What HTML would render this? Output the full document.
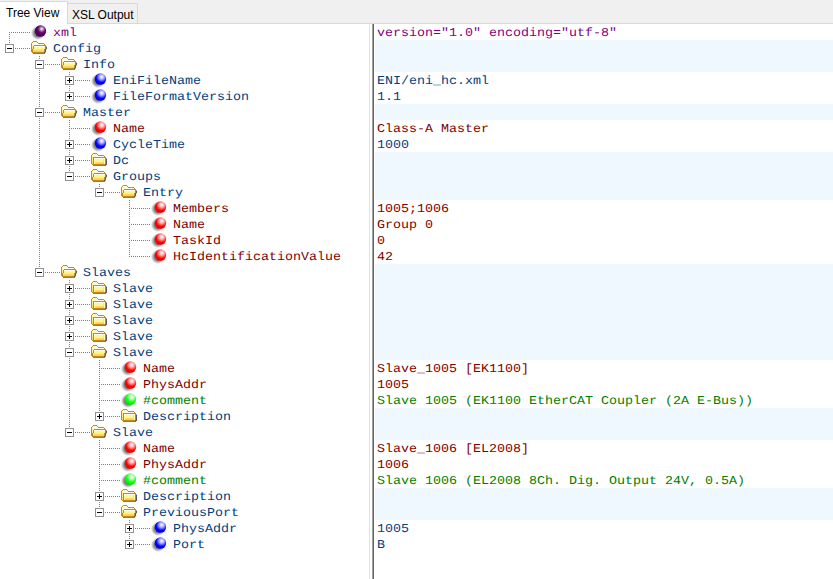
<!DOCTYPE html>
<html lang="en"><head><meta charset="utf-8"><title>XML Notepad</title>
<style>
html,body{margin:0;padding:0}
body{width:833px;height:579px;overflow:hidden;background:#fff;position:relative;
 font-family:"Liberation Mono","DejaVu Sans Mono",monospace;font-size:13.333px;line-height:16px}
#tabs{position:absolute;left:0;top:0;width:833px;height:23px;background:#f0f0f0;border-bottom:1px solid #d9d9d9}
.tab{position:absolute;font-family:"Liberation Sans",Arial,sans-serif;font-size:12px;letter-spacing:0;color:#000;box-sizing:border-box;white-space:nowrap}
#t1{left:0;top:1px;width:68px;height:23px;background:#fff;border-top:1px solid #d9d9d9;border-right:1px solid #d9d9d9;padding:4px 0 0 6px;line-height:14px}
#t2{left:67px;top:3px;width:71px;height:21px;background:#f0f0f0;border:1px solid #d9d9d9;border-left:none;padding:4px 0 0 5px;line-height:14px}
#left{position:absolute;left:0;top:24px;width:369px;height:555px;background:#fff;overflow:hidden}
#sp1{position:absolute;left:369px;top:24px;width:1px;height:555px;background:#e3e3e3}
#sp2{position:absolute;left:372px;top:24px;width:1px;height:555px;background:#a0a0a0}
#sp3{position:absolute;left:373px;top:24px;width:1px;height:555px;background:#646464}
#right{position:absolute;left:374px;top:24px;width:459px;height:555px;background:#fff;overflow:hidden}
.ov{position:absolute;left:0;top:0;pointer-events:none}
.n{position:absolute;height:16px;white-space:pre;padding-top:1px}
.v{position:absolute;left:1px;width:458px;height:16px;white-space:pre;padding-left:2px;padding-top:1px;box-sizing:border-box}
.n span,.v span{display:inline-block;text-rendering:geometricPrecision;transform:scaleY(0.9);transform-origin:0 12px}
.k{background:#f0f8ff}
.e{color:#004080}.a{color:#800000}.c{color:#008000}.p{color:#800080}
</style></head><body>
<div id="tabs"></div>
<div class="tab" id="t2">XSL Output</div>
<div class="tab" id="t1">Tree View</div>
<div id="left">
<div class="n p" style="left:53px;top:0px"><span>xml</span></div>
<div class="n e" style="left:53px;top:16px"><span>Config</span></div>
<div class="n e" style="left:83px;top:32px"><span>Info</span></div>
<div class="n e" style="left:113px;top:48px"><span>EniFileName</span></div>
<div class="n e" style="left:113px;top:64px"><span>FileFormatVersion</span></div>
<div class="n e" style="left:83px;top:80px"><span>Master</span></div>
<div class="n a" style="left:113px;top:96px"><span>Name</span></div>
<div class="n e" style="left:113px;top:112px"><span>CycleTime</span></div>
<div class="n e" style="left:113px;top:128px"><span>Dc</span></div>
<div class="n e" style="left:113px;top:144px"><span>Groups</span></div>
<div class="n e" style="left:143px;top:160px"><span>Entry</span></div>
<div class="n a" style="left:173px;top:176px"><span>Members</span></div>
<div class="n a" style="left:173px;top:192px"><span>Name</span></div>
<div class="n a" style="left:173px;top:208px"><span>TaskId</span></div>
<div class="n a" style="left:173px;top:224px"><span>HcIdentificationValue</span></div>
<div class="n e" style="left:83px;top:240px"><span>Slaves</span></div>
<div class="n e" style="left:113px;top:256px"><span>Slave</span></div>
<div class="n e" style="left:113px;top:272px"><span>Slave</span></div>
<div class="n e" style="left:113px;top:288px"><span>Slave</span></div>
<div class="n e" style="left:113px;top:304px"><span>Slave</span></div>
<div class="n e" style="left:113px;top:320px"><span>Slave</span></div>
<div class="n a" style="left:143px;top:336px"><span>Name</span></div>
<div class="n a" style="left:143px;top:352px"><span>PhysAddr</span></div>
<div class="n c" style="left:143px;top:368px"><span>#comment</span></div>
<div class="n e" style="left:143px;top:384px"><span>Description</span></div>
<div class="n e" style="left:113px;top:400px"><span>Slave</span></div>
<div class="n a" style="left:143px;top:416px"><span>Name</span></div>
<div class="n a" style="left:143px;top:432px"><span>PhysAddr</span></div>
<div class="n c" style="left:143px;top:448px"><span>#comment</span></div>
<div class="n e" style="left:143px;top:464px"><span>Description</span></div>
<div class="n e" style="left:143px;top:480px"><span>PreviousPort</span></div>
<div class="n e" style="left:173px;top:496px"><span>PhysAddr</span></div>
<div class="n e" style="left:173px;top:512px"><span>Port</span></div>
</div>
<div id="sp1"></div><div id="sp2"></div><div id="sp3"></div>
<div id="right">
<div class="v p" style="top:0px"><span>version="1.0" encoding="utf-8"</span></div>
<div class="v e k" style="top:16px"></div>
<div class="v e k" style="top:32px"></div>
<div class="v e" style="top:48px"><span>ENI/eni_hc.xml</span></div>
<div class="v e" style="top:64px"><span>1.1</span></div>
<div class="v e k" style="top:80px"></div>
<div class="v a" style="top:96px"><span>Class-A Master</span></div>
<div class="v e" style="top:112px"><span>1000</span></div>
<div class="v e k" style="top:128px"></div>
<div class="v e k" style="top:144px"></div>
<div class="v e k" style="top:160px"></div>
<div class="v a" style="top:176px"><span>1005;1006</span></div>
<div class="v a" style="top:192px"><span>Group 0</span></div>
<div class="v a" style="top:208px"><span>0</span></div>
<div class="v a" style="top:224px"><span>42</span></div>
<div class="v e k" style="top:240px"></div>
<div class="v e k" style="top:256px"></div>
<div class="v e k" style="top:272px"></div>
<div class="v e k" style="top:288px"></div>
<div class="v e k" style="top:304px"></div>
<div class="v e k" style="top:320px"></div>
<div class="v a" style="top:336px"><span>Slave_1005 [EK1100]</span></div>
<div class="v a" style="top:352px"><span>1005</span></div>
<div class="v c" style="top:368px"><span>Slave 1005 (EK1100 EtherCAT Coupler (2A E-Bus))</span></div>
<div class="v e k" style="top:384px"></div>
<div class="v e k" style="top:400px"></div>
<div class="v a" style="top:416px"><span>Slave_1006 [EL2008]</span></div>
<div class="v a" style="top:432px"><span>1006</span></div>
<div class="v c" style="top:448px"><span>Slave 1006 (EL2008 8Ch. Dig. Output 24V, 0.5A)</span></div>
<div class="v e k" style="top:464px"></div>
<div class="v e k" style="top:480px"></div>
<div class="v e" style="top:496px"><span>1005</span></div>
<div class="v e" style="top:512px"><span>B</span></div>
</div>
<svg class="ov" width="370" height="579" viewBox="0 0 370 579">
<defs>
<radialGradient id="gb" cx="0.61" cy="0.31" r="0.66" fx="0.61" fy="0.31"><stop offset="0" stop-color="#f4f4ff"/><stop offset="0.16" stop-color="#dcdcff"/><stop offset="0.36" stop-color="#9a9aff"/><stop offset="0.56" stop-color="#4444ff"/><stop offset="0.74" stop-color="#0000ff"/><stop offset="0.9" stop-color="#0000ff"/><stop offset="1" stop-color="#0000e0"/></radialGradient>
<radialGradient id="gr" cx="0.61" cy="0.31" r="0.66" fx="0.61" fy="0.31"><stop offset="0" stop-color="#fff4f4"/><stop offset="0.16" stop-color="#ffdcdc"/><stop offset="0.36" stop-color="#ff9a9a"/><stop offset="0.56" stop-color="#ff4444"/><stop offset="0.74" stop-color="#ff0000"/><stop offset="0.9" stop-color="#ff0000"/><stop offset="1" stop-color="#e00000"/></radialGradient>
<radialGradient id="gg" cx="0.61" cy="0.31" r="0.66" fx="0.61" fy="0.31"><stop offset="0" stop-color="#f4fff4"/><stop offset="0.16" stop-color="#dcffdc"/><stop offset="0.36" stop-color="#9aff9a"/><stop offset="0.56" stop-color="#44ff44"/><stop offset="0.74" stop-color="#00ff00"/><stop offset="0.9" stop-color="#00ff00"/><stop offset="1" stop-color="#00d800"/></radialGradient>
<radialGradient id="gp" cx="0.61" cy="0.31" r="0.66" fx="0.61" fy="0.31"><stop offset="0" stop-color="#f2e8f4"/><stop offset="0.12" stop-color="#dcc4e0"/><stop offset="0.28" stop-color="#a068a8"/><stop offset="0.45" stop-color="#6c1e74"/><stop offset="0.62" stop-color="#58005f"/><stop offset="0.9" stop-color="#560060"/><stop offset="1" stop-color="#4a0052"/></radialGradient>
<radialGradient id="gs" cx="0.5" cy="0.5" r="0.5"><stop offset="0" stop-color="#000" stop-opacity="0.5"/><stop offset="0.5" stop-color="#000" stop-opacity="0.5"/><stop offset="0.7" stop-color="#000" stop-opacity="0.3"/><stop offset="0.86" stop-color="#000" stop-opacity="0.1"/><stop offset="1" stop-color="#000" stop-opacity="0"/></radialGradient>
<linearGradient id="ff" x1="0" y1="0" x2="0" y2="1">
<stop offset="0" stop-color="#fffbd0"/><stop offset="0.45" stop-color="#fff48c"/><stop offset="1" stop-color="#f7d77a"/>
</linearGradient>
<g id="sph-s"><circle cx="7.0" cy="8.9" r="7.3" fill="url(#gs)"/></g>
<g id="folder" shape-rendering="crispEdges">
<rect x="2" y="1" width="4" height="1" fill="#c48a1c"/><rect x="1" y="2" width="1" height="1" fill="#c48a1c"/><rect x="2" y="2" width="4" height="1" fill="#fffbd6"/><rect x="6" y="2" width="1" height="1" fill="#c48a1c"/><rect x="0" y="3" width="1" height="1" fill="#c48a1c"/><rect x="1" y="3" width="6" height="1" fill="#fffbd6"/><rect x="7" y="3" width="6" height="1" fill="#c48a1c"/><rect x="0" y="4" width="1" height="1" fill="#c48a1c"/><rect x="1" y="4" width="1" height="1" fill="#fffef0"/><rect x="2" y="4" width="5" height="1" fill="#fffbd6"/><rect x="7" y="4" width="6" height="1" fill="#fffef0"/><rect x="13" y="4" width="1" height="1" fill="#c48a1c"/><rect x="0" y="5" width="1" height="1" fill="#c48a1c"/><rect x="1" y="5" width="2" height="1" fill="#fff29a"/><rect x="3" y="5" width="12" height="1" fill="#c48a1c"/><rect x="0" y="6" width="1" height="1" fill="#c48a1c"/><rect x="1" y="6" width="1" height="1" fill="#fff29a"/><rect x="2" y="6" width="1" height="1" fill="#c48a1c"/><rect x="3" y="6" width="11" height="1" fill="#fffde8"/><rect x="14" y="6" width="1" height="1" fill="#c48a1c"/><rect x="15" y="6" width="1" height="1" fill="rgba(70,70,100,0.45)"/><rect x="0" y="7" width="1" height="1" fill="#c48a1c"/><rect x="1" y="7" width="1" height="1" fill="#fff29a"/><rect x="2" y="7" width="1" height="1" fill="#c48a1c"/><rect x="3" y="7" width="11" height="1" fill="#fffa90"/><rect x="14" y="7" width="1" height="1" fill="#c48a1c"/><rect x="15" y="7" width="1" height="1" fill="rgba(55,45,55,0.8)"/><rect x="0" y="8" width="1" height="1" fill="#c48a1c"/><rect x="1" y="8" width="1" height="1" fill="#fbe38a"/><rect x="2" y="8" width="1" height="1" fill="#c48a1c"/><rect x="3" y="8" width="11" height="1" fill="#fff688"/><rect x="14" y="8" width="1" height="1" fill="#c48a1c"/><rect x="15" y="8" width="1" height="1" fill="rgba(55,45,55,0.8)"/><rect x="0" y="9" width="2" height="1" fill="#c48a1c"/><rect x="2" y="9" width="10" height="1" fill="#ffec80"/><rect x="12" y="9" width="1" height="1" fill="#fff688"/><rect x="13" y="9" width="1" height="1" fill="#c48a1c"/><rect x="14" y="9" width="1" height="1" fill="rgba(55,45,55,0.8)"/><rect x="15" y="9" width="1" height="1" fill="rgba(70,70,100,0.30)"/><rect x="0" y="10" width="2" height="1" fill="#c48a1c"/><rect x="2" y="10" width="11" height="1" fill="#ffd872"/><rect x="13" y="10" width="1" height="1" fill="#c48a1c"/><rect x="14" y="10" width="1" height="1" fill="rgba(55,45,55,0.8)"/><rect x="0" y="11" width="2" height="1" fill="#c48a1c"/><rect x="2" y="11" width="11" height="1" fill="#fcc864"/><rect x="13" y="11" width="1" height="1" fill="#c48a1c"/><rect x="14" y="11" width="1" height="1" fill="rgba(55,45,55,0.8)"/><rect x="1" y="12" width="12" height="1" fill="#c48a1c"/><rect x="13" y="12" width="1" height="1" fill="rgba(55,45,55,0.8)"/><rect x="14" y="12" width="1" height="1" fill="rgba(70,70,100,0.45)"/><rect x="2" y="13" width="12" height="1" fill="rgba(60,60,80,0.68)"/>
</g>
<g id="folderc" shape-rendering="crispEdges">
<rect x="2" y="1" width="4" height="1" fill="#c48a1c"/><rect x="1" y="2" width="1" height="1" fill="#c48a1c"/><rect x="2" y="2" width="4" height="1" fill="#fffbd6"/><rect x="6" y="2" width="1" height="1" fill="#c48a1c"/><rect x="0" y="3" width="1" height="1" fill="#c48a1c"/><rect x="1" y="3" width="6" height="1" fill="#fffbd6"/><rect x="7" y="3" width="6" height="1" fill="#c48a1c"/><rect x="0" y="4" width="1" height="1" fill="#c48a1c"/><rect x="1" y="4" width="1" height="1" fill="#fff29a"/><rect x="2" y="4" width="4" height="1" fill="#fffbd6"/><rect x="6" y="4" width="7" height="1" fill="#fffef0"/><rect x="13" y="4" width="1" height="1" fill="#c48a1c"/><rect x="0" y="5" width="1" height="1" fill="#c48a1c"/><rect x="1" y="5" width="1" height="1" fill="#fff29a"/><rect x="2" y="5" width="13" height="1" fill="#c48a1c"/><rect x="0" y="6" width="1" height="1" fill="#c48a1c"/><rect x="1" y="6" width="1" height="1" fill="#fff29a"/><rect x="2" y="6" width="1" height="1" fill="#c48a1c"/><rect x="3" y="6" width="11" height="1" fill="#fffde8"/><rect x="14" y="6" width="1" height="1" fill="#c48a1c"/><rect x="15" y="6" width="1" height="1" fill="rgba(70,70,100,0.45)"/><rect x="0" y="7" width="1" height="1" fill="#c48a1c"/><rect x="1" y="7" width="1" height="1" fill="#fbe38a"/><rect x="2" y="7" width="1" height="1" fill="#c48a1c"/><rect x="3" y="7" width="9" height="1" fill="#fffa90"/><rect x="12" y="7" width="1" height="1" fill="#ffdc92"/><rect x="13" y="7" width="1" height="1" fill="#fffcc0"/><rect x="14" y="7" width="1" height="1" fill="#c48a1c"/><rect x="15" y="7" width="1" height="1" fill="rgba(55,45,55,0.8)"/><rect x="0" y="8" width="1" height="1" fill="#c48a1c"/><rect x="1" y="8" width="1" height="1" fill="#fbe38a"/><rect x="2" y="8" width="1" height="1" fill="#c48a1c"/><rect x="3" y="8" width="9" height="1" fill="#fffa90"/><rect x="12" y="8" width="1" height="1" fill="#ffdc92"/><rect x="13" y="8" width="1" height="1" fill="#fffcc0"/><rect x="14" y="8" width="1" height="1" fill="#c48a1c"/><rect x="15" y="8" width="1" height="1" fill="rgba(55,45,55,0.8)"/><rect x="0" y="9" width="1" height="1" fill="#c48a1c"/><rect x="1" y="9" width="1" height="1" fill="#fbd276"/><rect x="2" y="9" width="1" height="1" fill="#c48a1c"/><rect x="3" y="9" width="9" height="1" fill="#fff688"/><rect x="12" y="9" width="1" height="1" fill="#ffdc92"/><rect x="13" y="9" width="1" height="1" fill="#fffcc0"/><rect x="14" y="9" width="1" height="1" fill="#c48a1c"/><rect x="15" y="9" width="1" height="1" fill="rgba(55,45,55,0.8)"/><rect x="0" y="10" width="1" height="1" fill="#c48a1c"/><rect x="1" y="10" width="1" height="1" fill="#fbd276"/><rect x="2" y="10" width="1" height="1" fill="#c48a1c"/><rect x="3" y="10" width="1" height="1" fill="#fffa90"/><rect x="4" y="10" width="9" height="1" fill="#ffd872"/><rect x="13" y="10" width="1" height="1" fill="#fffcc0"/><rect x="14" y="10" width="1" height="1" fill="#c48a1c"/><rect x="15" y="10" width="1" height="1" fill="rgba(55,45,55,0.8)"/><rect x="0" y="11" width="1" height="1" fill="#c48a1c"/><rect x="1" y="11" width="1" height="1" fill="#fbd276"/><rect x="2" y="11" width="1" height="1" fill="#c48a1c"/><rect x="3" y="11" width="1" height="1" fill="#fffa90"/><rect x="4" y="11" width="9" height="1" fill="#fcc864"/><rect x="13" y="11" width="1" height="1" fill="#fffcc0"/><rect x="14" y="11" width="1" height="1" fill="#c48a1c"/><rect x="15" y="11" width="1" height="1" fill="rgba(55,45,55,0.8)"/><rect x="1" y="12" width="13" height="1" fill="#c48a1c"/><rect x="14" y="12" width="2" height="1" fill="rgba(55,45,55,0.8)"/><rect x="2" y="13" width="13" height="1" fill="rgba(60,60,80,0.68)"/>
</g>
</defs>
<path d="M9 32h1v1h-1zM11 32h1v1h-1zM13 32h1v1h-1zM15 32h1v1h-1zM17 32h1v1h-1zM19 32h1v1h-1zM21 32h1v1h-1zM23 32h1v1h-1zM25 32h1v1h-1zM27 32h1v1h-1zM29 32h1v1h-1zM9 34h1v1h-1zM9 36h1v1h-1zM9 38h1v1h-1zM9 40h1v1h-1zM9 42h1v1h-1zM15 48h1v1h-1zM17 48h1v1h-1zM19 48h1v1h-1zM21 48h1v1h-1zM23 48h1v1h-1zM25 48h1v1h-1zM27 48h1v1h-1zM29 48h1v1h-1zM39 56h1v1h-1zM39 58h1v1h-1zM45 64h1v1h-1zM47 64h1v1h-1zM49 64h1v1h-1zM51 64h1v1h-1zM53 64h1v1h-1zM55 64h1v1h-1zM57 64h1v1h-1zM59 64h1v1h-1zM39 70h1v1h-1zM39 72h1v1h-1zM69 72h1v1h-1zM39 74h1v1h-1zM69 74h1v1h-1zM39 76h1v1h-1zM39 78h1v1h-1zM39 80h1v1h-1zM75 80h1v1h-1zM77 80h1v1h-1zM79 80h1v1h-1zM81 80h1v1h-1zM83 80h1v1h-1zM85 80h1v1h-1zM87 80h1v1h-1zM89 80h1v1h-1zM39 82h1v1h-1zM39 84h1v1h-1zM39 86h1v1h-1zM69 86h1v1h-1zM39 88h1v1h-1zM69 88h1v1h-1zM39 90h1v1h-1zM69 90h1v1h-1zM39 92h1v1h-1zM39 94h1v1h-1zM39 96h1v1h-1zM75 96h1v1h-1zM77 96h1v1h-1zM79 96h1v1h-1zM81 96h1v1h-1zM83 96h1v1h-1zM85 96h1v1h-1zM87 96h1v1h-1zM89 96h1v1h-1zM39 98h1v1h-1zM39 100h1v1h-1zM39 102h1v1h-1zM39 104h1v1h-1zM39 106h1v1h-1zM45 112h1v1h-1zM47 112h1v1h-1zM49 112h1v1h-1zM51 112h1v1h-1zM53 112h1v1h-1zM55 112h1v1h-1zM57 112h1v1h-1zM59 112h1v1h-1zM39 118h1v1h-1zM39 120h1v1h-1zM69 120h1v1h-1zM39 122h1v1h-1zM69 122h1v1h-1zM39 124h1v1h-1zM69 124h1v1h-1zM39 126h1v1h-1zM69 126h1v1h-1zM39 128h1v1h-1zM69 128h1v1h-1zM71 128h1v1h-1zM73 128h1v1h-1zM75 128h1v1h-1zM77 128h1v1h-1zM79 128h1v1h-1zM81 128h1v1h-1zM83 128h1v1h-1zM85 128h1v1h-1zM87 128h1v1h-1zM89 128h1v1h-1zM39 130h1v1h-1zM69 130h1v1h-1zM39 132h1v1h-1zM69 132h1v1h-1zM39 134h1v1h-1zM69 134h1v1h-1zM39 136h1v1h-1zM69 136h1v1h-1zM39 138h1v1h-1zM69 138h1v1h-1zM39 140h1v1h-1zM39 142h1v1h-1zM39 144h1v1h-1zM75 144h1v1h-1zM77 144h1v1h-1zM79 144h1v1h-1zM81 144h1v1h-1zM83 144h1v1h-1zM85 144h1v1h-1zM87 144h1v1h-1zM89 144h1v1h-1zM39 146h1v1h-1zM39 148h1v1h-1zM39 150h1v1h-1zM69 150h1v1h-1zM39 152h1v1h-1zM69 152h1v1h-1zM39 154h1v1h-1zM69 154h1v1h-1zM39 156h1v1h-1zM39 158h1v1h-1zM39 160h1v1h-1zM75 160h1v1h-1zM77 160h1v1h-1zM79 160h1v1h-1zM81 160h1v1h-1zM83 160h1v1h-1zM85 160h1v1h-1zM87 160h1v1h-1zM89 160h1v1h-1zM39 162h1v1h-1zM39 164h1v1h-1zM39 166h1v1h-1zM69 166h1v1h-1zM39 168h1v1h-1zM69 168h1v1h-1zM39 170h1v1h-1zM69 170h1v1h-1zM39 172h1v1h-1zM39 174h1v1h-1zM39 176h1v1h-1zM75 176h1v1h-1zM77 176h1v1h-1zM79 176h1v1h-1zM81 176h1v1h-1zM83 176h1v1h-1zM85 176h1v1h-1zM87 176h1v1h-1zM89 176h1v1h-1zM39 178h1v1h-1zM39 180h1v1h-1zM39 182h1v1h-1zM39 184h1v1h-1zM99 184h1v1h-1zM39 186h1v1h-1zM99 186h1v1h-1zM39 188h1v1h-1zM39 190h1v1h-1zM39 192h1v1h-1zM105 192h1v1h-1zM107 192h1v1h-1zM109 192h1v1h-1zM111 192h1v1h-1zM113 192h1v1h-1zM115 192h1v1h-1zM117 192h1v1h-1zM119 192h1v1h-1zM39 194h1v1h-1zM39 196h1v1h-1zM39 198h1v1h-1zM39 200h1v1h-1zM129 200h1v1h-1zM39 202h1v1h-1zM129 202h1v1h-1zM39 204h1v1h-1zM129 204h1v1h-1zM39 206h1v1h-1zM129 206h1v1h-1zM39 208h1v1h-1zM129 208h1v1h-1zM131 208h1v1h-1zM133 208h1v1h-1zM135 208h1v1h-1zM137 208h1v1h-1zM139 208h1v1h-1zM141 208h1v1h-1zM143 208h1v1h-1zM145 208h1v1h-1zM147 208h1v1h-1zM149 208h1v1h-1zM39 210h1v1h-1zM129 210h1v1h-1zM39 212h1v1h-1zM129 212h1v1h-1zM39 214h1v1h-1zM129 214h1v1h-1zM39 216h1v1h-1zM129 216h1v1h-1zM39 218h1v1h-1zM129 218h1v1h-1zM39 220h1v1h-1zM129 220h1v1h-1zM39 222h1v1h-1zM129 222h1v1h-1zM39 224h1v1h-1zM129 224h1v1h-1zM131 224h1v1h-1zM133 224h1v1h-1zM135 224h1v1h-1zM137 224h1v1h-1zM139 224h1v1h-1zM141 224h1v1h-1zM143 224h1v1h-1zM145 224h1v1h-1zM147 224h1v1h-1zM149 224h1v1h-1zM39 226h1v1h-1zM129 226h1v1h-1zM39 228h1v1h-1zM129 228h1v1h-1zM39 230h1v1h-1zM129 230h1v1h-1zM39 232h1v1h-1zM129 232h1v1h-1zM39 234h1v1h-1zM129 234h1v1h-1zM39 236h1v1h-1zM129 236h1v1h-1zM39 238h1v1h-1zM129 238h1v1h-1zM39 240h1v1h-1zM129 240h1v1h-1zM131 240h1v1h-1zM133 240h1v1h-1zM135 240h1v1h-1zM137 240h1v1h-1zM139 240h1v1h-1zM141 240h1v1h-1zM143 240h1v1h-1zM145 240h1v1h-1zM147 240h1v1h-1zM149 240h1v1h-1zM39 242h1v1h-1zM129 242h1v1h-1zM39 244h1v1h-1zM129 244h1v1h-1zM39 246h1v1h-1zM129 246h1v1h-1zM39 248h1v1h-1zM129 248h1v1h-1zM39 250h1v1h-1zM129 250h1v1h-1zM39 252h1v1h-1zM129 252h1v1h-1zM39 254h1v1h-1zM129 254h1v1h-1zM39 256h1v1h-1zM129 256h1v1h-1zM131 256h1v1h-1zM133 256h1v1h-1zM135 256h1v1h-1zM137 256h1v1h-1zM139 256h1v1h-1zM141 256h1v1h-1zM143 256h1v1h-1zM145 256h1v1h-1zM147 256h1v1h-1zM149 256h1v1h-1zM39 258h1v1h-1zM39 260h1v1h-1zM39 262h1v1h-1zM39 264h1v1h-1zM39 266h1v1h-1zM45 272h1v1h-1zM47 272h1v1h-1zM49 272h1v1h-1zM51 272h1v1h-1zM53 272h1v1h-1zM55 272h1v1h-1zM57 272h1v1h-1zM59 272h1v1h-1zM69 280h1v1h-1zM69 282h1v1h-1zM75 288h1v1h-1zM77 288h1v1h-1zM79 288h1v1h-1zM81 288h1v1h-1zM83 288h1v1h-1zM85 288h1v1h-1zM87 288h1v1h-1zM89 288h1v1h-1zM69 294h1v1h-1zM69 296h1v1h-1zM69 298h1v1h-1zM75 304h1v1h-1zM77 304h1v1h-1zM79 304h1v1h-1zM81 304h1v1h-1zM83 304h1v1h-1zM85 304h1v1h-1zM87 304h1v1h-1zM89 304h1v1h-1zM69 310h1v1h-1zM69 312h1v1h-1zM69 314h1v1h-1zM75 320h1v1h-1zM77 320h1v1h-1zM79 320h1v1h-1zM81 320h1v1h-1zM83 320h1v1h-1zM85 320h1v1h-1zM87 320h1v1h-1zM89 320h1v1h-1zM69 326h1v1h-1zM69 328h1v1h-1zM69 330h1v1h-1zM75 336h1v1h-1zM77 336h1v1h-1zM79 336h1v1h-1zM81 336h1v1h-1zM83 336h1v1h-1zM85 336h1v1h-1zM87 336h1v1h-1zM89 336h1v1h-1zM69 342h1v1h-1zM69 344h1v1h-1zM69 346h1v1h-1zM75 352h1v1h-1zM77 352h1v1h-1zM79 352h1v1h-1zM81 352h1v1h-1zM83 352h1v1h-1zM85 352h1v1h-1zM87 352h1v1h-1zM89 352h1v1h-1zM69 358h1v1h-1zM69 360h1v1h-1zM99 360h1v1h-1zM69 362h1v1h-1zM99 362h1v1h-1zM69 364h1v1h-1zM99 364h1v1h-1zM69 366h1v1h-1zM99 366h1v1h-1zM69 368h1v1h-1zM99 368h1v1h-1zM101 368h1v1h-1zM103 368h1v1h-1zM105 368h1v1h-1zM107 368h1v1h-1zM109 368h1v1h-1zM111 368h1v1h-1zM113 368h1v1h-1zM115 368h1v1h-1zM117 368h1v1h-1zM119 368h1v1h-1zM69 370h1v1h-1zM99 370h1v1h-1zM69 372h1v1h-1zM99 372h1v1h-1zM69 374h1v1h-1zM99 374h1v1h-1zM69 376h1v1h-1zM99 376h1v1h-1zM69 378h1v1h-1zM99 378h1v1h-1zM69 380h1v1h-1zM99 380h1v1h-1zM69 382h1v1h-1zM99 382h1v1h-1zM69 384h1v1h-1zM99 384h1v1h-1zM101 384h1v1h-1zM103 384h1v1h-1zM105 384h1v1h-1zM107 384h1v1h-1zM109 384h1v1h-1zM111 384h1v1h-1zM113 384h1v1h-1zM115 384h1v1h-1zM117 384h1v1h-1zM119 384h1v1h-1zM69 386h1v1h-1zM99 386h1v1h-1zM69 388h1v1h-1zM99 388h1v1h-1zM69 390h1v1h-1zM99 390h1v1h-1zM69 392h1v1h-1zM99 392h1v1h-1zM69 394h1v1h-1zM99 394h1v1h-1zM69 396h1v1h-1zM99 396h1v1h-1zM69 398h1v1h-1zM99 398h1v1h-1zM69 400h1v1h-1zM99 400h1v1h-1zM101 400h1v1h-1zM103 400h1v1h-1zM105 400h1v1h-1zM107 400h1v1h-1zM109 400h1v1h-1zM111 400h1v1h-1zM113 400h1v1h-1zM115 400h1v1h-1zM117 400h1v1h-1zM119 400h1v1h-1zM69 402h1v1h-1zM99 402h1v1h-1zM69 404h1v1h-1zM99 404h1v1h-1zM69 406h1v1h-1zM99 406h1v1h-1zM69 408h1v1h-1zM99 408h1v1h-1zM69 410h1v1h-1zM99 410h1v1h-1zM69 412h1v1h-1zM69 414h1v1h-1zM69 416h1v1h-1zM105 416h1v1h-1zM107 416h1v1h-1zM109 416h1v1h-1zM111 416h1v1h-1zM113 416h1v1h-1zM115 416h1v1h-1zM117 416h1v1h-1zM119 416h1v1h-1zM69 418h1v1h-1zM69 420h1v1h-1zM69 422h1v1h-1zM69 424h1v1h-1zM69 426h1v1h-1zM75 432h1v1h-1zM77 432h1v1h-1zM79 432h1v1h-1zM81 432h1v1h-1zM83 432h1v1h-1zM85 432h1v1h-1zM87 432h1v1h-1zM89 432h1v1h-1zM99 440h1v1h-1zM99 442h1v1h-1zM99 444h1v1h-1zM99 446h1v1h-1zM99 448h1v1h-1zM101 448h1v1h-1zM103 448h1v1h-1zM105 448h1v1h-1zM107 448h1v1h-1zM109 448h1v1h-1zM111 448h1v1h-1zM113 448h1v1h-1zM115 448h1v1h-1zM117 448h1v1h-1zM119 448h1v1h-1zM99 450h1v1h-1zM99 452h1v1h-1zM99 454h1v1h-1zM99 456h1v1h-1zM99 458h1v1h-1zM99 460h1v1h-1zM99 462h1v1h-1zM99 464h1v1h-1zM101 464h1v1h-1zM103 464h1v1h-1zM105 464h1v1h-1zM107 464h1v1h-1zM109 464h1v1h-1zM111 464h1v1h-1zM113 464h1v1h-1zM115 464h1v1h-1zM117 464h1v1h-1zM119 464h1v1h-1zM99 466h1v1h-1zM99 468h1v1h-1zM99 470h1v1h-1zM99 472h1v1h-1zM99 474h1v1h-1zM99 476h1v1h-1zM99 478h1v1h-1zM99 480h1v1h-1zM101 480h1v1h-1zM103 480h1v1h-1zM105 480h1v1h-1zM107 480h1v1h-1zM109 480h1v1h-1zM111 480h1v1h-1zM113 480h1v1h-1zM115 480h1v1h-1zM117 480h1v1h-1zM119 480h1v1h-1zM99 482h1v1h-1zM99 484h1v1h-1zM99 486h1v1h-1zM99 488h1v1h-1zM99 490h1v1h-1zM105 496h1v1h-1zM107 496h1v1h-1zM109 496h1v1h-1zM111 496h1v1h-1zM113 496h1v1h-1zM115 496h1v1h-1zM117 496h1v1h-1zM119 496h1v1h-1zM99 502h1v1h-1zM99 504h1v1h-1zM99 506h1v1h-1zM105 512h1v1h-1zM107 512h1v1h-1zM109 512h1v1h-1zM111 512h1v1h-1zM113 512h1v1h-1zM115 512h1v1h-1zM117 512h1v1h-1zM119 512h1v1h-1zM129 520h1v1h-1zM129 522h1v1h-1zM135 528h1v1h-1zM137 528h1v1h-1zM139 528h1v1h-1zM141 528h1v1h-1zM143 528h1v1h-1zM145 528h1v1h-1zM147 528h1v1h-1zM149 528h1v1h-1zM129 534h1v1h-1zM129 536h1v1h-1zM129 538h1v1h-1zM135 544h1v1h-1zM137 544h1v1h-1zM139 544h1v1h-1zM141 544h1v1h-1zM143 544h1v1h-1zM145 544h1v1h-1zM147 544h1v1h-1zM149 544h1v1h-1z" fill="#808080" shape-rendering="crispEdges"/>
<rect x="5.5" y="44.5" width="8" height="8" fill="#fff" stroke="#919191" shape-rendering="crispEdges"/>
<rect x="7" y="48" width="5" height="1" fill="#000" shape-rendering="crispEdges"/>
<rect x="35.5" y="60.5" width="8" height="8" fill="#fff" stroke="#919191" shape-rendering="crispEdges"/>
<rect x="37" y="64" width="5" height="1" fill="#000" shape-rendering="crispEdges"/>
<rect x="65.5" y="76.5" width="8" height="8" fill="#fff" stroke="#919191" shape-rendering="crispEdges"/>
<rect x="67" y="80" width="5" height="1" fill="#000" shape-rendering="crispEdges"/>
<rect x="69" y="78" width="1" height="5" fill="#000" shape-rendering="crispEdges"/>
<rect x="65.5" y="92.5" width="8" height="8" fill="#fff" stroke="#919191" shape-rendering="crispEdges"/>
<rect x="67" y="96" width="5" height="1" fill="#000" shape-rendering="crispEdges"/>
<rect x="69" y="94" width="1" height="5" fill="#000" shape-rendering="crispEdges"/>
<rect x="35.5" y="108.5" width="8" height="8" fill="#fff" stroke="#919191" shape-rendering="crispEdges"/>
<rect x="37" y="112" width="5" height="1" fill="#000" shape-rendering="crispEdges"/>
<rect x="65.5" y="140.5" width="8" height="8" fill="#fff" stroke="#919191" shape-rendering="crispEdges"/>
<rect x="67" y="144" width="5" height="1" fill="#000" shape-rendering="crispEdges"/>
<rect x="69" y="142" width="1" height="5" fill="#000" shape-rendering="crispEdges"/>
<rect x="65.5" y="156.5" width="8" height="8" fill="#fff" stroke="#919191" shape-rendering="crispEdges"/>
<rect x="67" y="160" width="5" height="1" fill="#000" shape-rendering="crispEdges"/>
<rect x="69" y="158" width="1" height="5" fill="#000" shape-rendering="crispEdges"/>
<rect x="65.5" y="172.5" width="8" height="8" fill="#fff" stroke="#919191" shape-rendering="crispEdges"/>
<rect x="67" y="176" width="5" height="1" fill="#000" shape-rendering="crispEdges"/>
<rect x="95.5" y="188.5" width="8" height="8" fill="#fff" stroke="#919191" shape-rendering="crispEdges"/>
<rect x="97" y="192" width="5" height="1" fill="#000" shape-rendering="crispEdges"/>
<rect x="35.5" y="268.5" width="8" height="8" fill="#fff" stroke="#919191" shape-rendering="crispEdges"/>
<rect x="37" y="272" width="5" height="1" fill="#000" shape-rendering="crispEdges"/>
<rect x="65.5" y="284.5" width="8" height="8" fill="#fff" stroke="#919191" shape-rendering="crispEdges"/>
<rect x="67" y="288" width="5" height="1" fill="#000" shape-rendering="crispEdges"/>
<rect x="69" y="286" width="1" height="5" fill="#000" shape-rendering="crispEdges"/>
<rect x="65.5" y="300.5" width="8" height="8" fill="#fff" stroke="#919191" shape-rendering="crispEdges"/>
<rect x="67" y="304" width="5" height="1" fill="#000" shape-rendering="crispEdges"/>
<rect x="69" y="302" width="1" height="5" fill="#000" shape-rendering="crispEdges"/>
<rect x="65.5" y="316.5" width="8" height="8" fill="#fff" stroke="#919191" shape-rendering="crispEdges"/>
<rect x="67" y="320" width="5" height="1" fill="#000" shape-rendering="crispEdges"/>
<rect x="69" y="318" width="1" height="5" fill="#000" shape-rendering="crispEdges"/>
<rect x="65.5" y="332.5" width="8" height="8" fill="#fff" stroke="#919191" shape-rendering="crispEdges"/>
<rect x="67" y="336" width="5" height="1" fill="#000" shape-rendering="crispEdges"/>
<rect x="69" y="334" width="1" height="5" fill="#000" shape-rendering="crispEdges"/>
<rect x="65.5" y="348.5" width="8" height="8" fill="#fff" stroke="#919191" shape-rendering="crispEdges"/>
<rect x="67" y="352" width="5" height="1" fill="#000" shape-rendering="crispEdges"/>
<rect x="95.5" y="412.5" width="8" height="8" fill="#fff" stroke="#919191" shape-rendering="crispEdges"/>
<rect x="97" y="416" width="5" height="1" fill="#000" shape-rendering="crispEdges"/>
<rect x="99" y="414" width="1" height="5" fill="#000" shape-rendering="crispEdges"/>
<rect x="65.5" y="428.5" width="8" height="8" fill="#fff" stroke="#919191" shape-rendering="crispEdges"/>
<rect x="67" y="432" width="5" height="1" fill="#000" shape-rendering="crispEdges"/>
<rect x="95.5" y="492.5" width="8" height="8" fill="#fff" stroke="#919191" shape-rendering="crispEdges"/>
<rect x="97" y="496" width="5" height="1" fill="#000" shape-rendering="crispEdges"/>
<rect x="99" y="494" width="1" height="5" fill="#000" shape-rendering="crispEdges"/>
<rect x="95.5" y="508.5" width="8" height="8" fill="#fff" stroke="#919191" shape-rendering="crispEdges"/>
<rect x="97" y="512" width="5" height="1" fill="#000" shape-rendering="crispEdges"/>
<rect x="125.5" y="524.5" width="8" height="8" fill="#fff" stroke="#919191" shape-rendering="crispEdges"/>
<rect x="127" y="528" width="5" height="1" fill="#000" shape-rendering="crispEdges"/>
<rect x="129" y="526" width="1" height="5" fill="#000" shape-rendering="crispEdges"/>
<rect x="125.5" y="540.5" width="8" height="8" fill="#fff" stroke="#919191" shape-rendering="crispEdges"/>
<rect x="127" y="544" width="5" height="1" fill="#000" shape-rendering="crispEdges"/>
<rect x="129" y="542" width="1" height="5" fill="#000" shape-rendering="crispEdges"/>
<use href="#sph-s" x="31" y="24"/>
<circle cx="40.45" cy="31.1" r="5.75" fill="url(#gp)"/>
<use href="#folder" x="31" y="40"/>
<use href="#folder" x="61" y="56"/>
<use href="#sph-s" x="91" y="72"/>
<circle cx="100.45" cy="79.1" r="5.75" fill="url(#gb)"/>
<use href="#sph-s" x="91" y="88"/>
<circle cx="100.45" cy="95.1" r="5.75" fill="url(#gb)"/>
<use href="#folder" x="61" y="104"/>
<use href="#sph-s" x="91" y="120"/>
<circle cx="100.45" cy="127.1" r="5.75" fill="url(#gr)"/>
<use href="#sph-s" x="91" y="136"/>
<circle cx="100.45" cy="143.1" r="5.75" fill="url(#gb)"/>
<use href="#folderc" x="91" y="152"/>
<use href="#folder" x="91" y="168"/>
<use href="#folder" x="121" y="184"/>
<use href="#sph-s" x="151" y="200"/>
<circle cx="160.45" cy="207.1" r="5.75" fill="url(#gr)"/>
<use href="#sph-s" x="151" y="216"/>
<circle cx="160.45" cy="223.1" r="5.75" fill="url(#gr)"/>
<use href="#sph-s" x="151" y="232"/>
<circle cx="160.45" cy="239.1" r="5.75" fill="url(#gr)"/>
<use href="#sph-s" x="151" y="248"/>
<circle cx="160.45" cy="255.1" r="5.75" fill="url(#gr)"/>
<use href="#folder" x="61" y="264"/>
<use href="#folderc" x="91" y="280"/>
<use href="#folderc" x="91" y="296"/>
<use href="#folderc" x="91" y="312"/>
<use href="#folderc" x="91" y="328"/>
<use href="#folder" x="91" y="344"/>
<use href="#sph-s" x="121" y="360"/>
<circle cx="130.45" cy="367.1" r="5.75" fill="url(#gr)"/>
<use href="#sph-s" x="121" y="376"/>
<circle cx="130.45" cy="383.1" r="5.75" fill="url(#gr)"/>
<use href="#sph-s" x="121" y="392"/>
<circle cx="130.45" cy="399.1" r="5.75" fill="url(#gg)"/>
<use href="#folderc" x="121" y="408"/>
<use href="#folder" x="91" y="424"/>
<use href="#sph-s" x="121" y="440"/>
<circle cx="130.45" cy="447.1" r="5.75" fill="url(#gr)"/>
<use href="#sph-s" x="121" y="456"/>
<circle cx="130.45" cy="463.1" r="5.75" fill="url(#gr)"/>
<use href="#sph-s" x="121" y="472"/>
<circle cx="130.45" cy="479.1" r="5.75" fill="url(#gg)"/>
<use href="#folderc" x="121" y="488"/>
<use href="#folder" x="121" y="504"/>
<use href="#sph-s" x="151" y="520"/>
<circle cx="160.45" cy="527.1" r="5.75" fill="url(#gb)"/>
<use href="#sph-s" x="151" y="536"/>
<circle cx="160.45" cy="543.1" r="5.75" fill="url(#gb)"/>
</svg>
</body></html>
